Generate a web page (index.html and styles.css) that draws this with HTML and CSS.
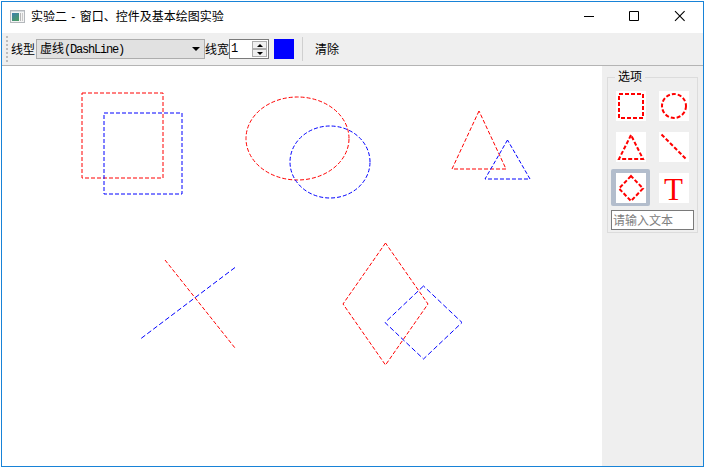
FILE: index.html
```html
<!DOCTYPE html>
<html lang="zh-CN">
<head>
<meta charset="utf-8">
<title>实验二 - 窗口、控件及基本绘图实验</title>
<link rel="stylesheet" href="styles.css">
</head>
<body>
<div class="window">
  <header class="titlebar">
    <svg class="app-icon" width="16" height="14" viewBox="0 0 16 14">
      <defs><linearGradient id="pane" x1="0" y1="0" x2="0.6" y2="1"><stop offset="0" stop-color="#3d7fae"/><stop offset="1" stop-color="#4a9a68"/></linearGradient></defs>
      <rect x="0.5" y="0.5" width="14" height="12" fill="#f4f4f4" stroke="#b4b8bc"/>
      <rect x="1" y="1" width="13" height="1" fill="#d5dade"/>
      <rect x="2" y="3" width="7" height="8" fill="url(#pane)"/>
      <rect x="10" y="3" width="1" height="8" fill="#b8b8b8"/>
      <rect x="12" y="3" width="1" height="8" fill="#c8c8c8"/>
    </svg>
    <h1 class="title">实验二 - 窗口、控件及基本绘图实验</h1>
    <svg class="caption" width="102" height="12" viewBox="0 0 102 12" fill="none" stroke="#000">
      <path d="M0 6.5H10M45.5 1.5H54.500V10.500H45.500Z"/>
      <path d="M91 1.200L100.600 10.800M100.600 1.200L91 10.800" stroke-width="1.100"/>
    </svg>
  </header>

  <div class="toolbar">
    <span class="grip"></span>
    <span class="label">线型</span>
    <div class="combo"><span>虚线<span class="latin">(DashLine)</span></span><i class="arrow"></i></div>
    <span class="label">线宽</span>
    <div class="spin"><span class="latin">1</span>
      <div class="steps"><button class="step"><i class="up"></i></button><button class="step"><i class="down"></i></button></div>
    </div>
    <span class="swatch"></span>
    <span class="divider"></span>
    <span class="label">清除</span>
  </div>

  <main class="content">
    <svg class="canvas" viewBox="2 66 600 400" width="600" height="400">
      <g class="red">
        <path d="M82 93H163V178H82Z"/>
        <path d="M349 138.500A51.500 41.500 0 0 0 246 138.500A51.500 41.500 0 0 0 349 138.500"/>
        <path d="M479 111L452 169H506Z"/>
        <path d="M165 260L235 348"/>
        <path d="M385.500 243L343 304L385.500 365L428 304Z"/>
      </g>
      <g class="blue">
        <path d="M104 113H182V194H104Z"/>
        <path d="M370 162A40 36 0 0 0 290 162A40 36 0 0 0 370 162"/>
        <path d="M507.500 140L485 179H530Z"/>
        <path class="long" d="M235 267.500L141 338.500"/>
        <path class="long" d="M423.500 286L385 322.500L423.500 359L462 322.500Z"/>
      </g>
    </svg>
    <aside class="side">
      <fieldset class="options">
        <legend>选项</legend>
        <div class="tools">
          <button class="tool"><svg viewBox="0 0 30 30"><path d="M3 3H27V27H3Z"/></svg></button>
          <button class="tool"><svg viewBox="0 0 30 30"><circle cx="15" cy="15" r="12"/></svg></button>
          <button class="tool"><svg viewBox="0 0 30 30"><path d="M15 3L3 27H27Z"/></svg></button>
          <button class="tool"><svg viewBox="0 0 30 30"><path d="M2.500 2.500L27.500 27.500"/></svg></button>
          <button class="tool selected"><svg viewBox="0 0 30 30"><path d="M15 3L3 15.500L15 28L27 15.500Z"/></svg></button>
          <button class="tool"><span class="letter">T</span></button>
        </div>
        <input class="text" type="text" placeholder="请输入文本">
      </fieldset>
    </aside>
  </main>
</div>
</body>
</html>
```
FILE: styles.css
```css
* { box-sizing: border-box; }
body {
  margin: 0;
  padding: 1px;
  width: 705px;
  height: 468px;
  overflow: hidden;
  background: #fff;
  color: #000;
  font: 12px/16px "Liberation Sans", "Noto Sans CJK SC", sans-serif;
}
button { margin: 0; padding: 0; border: 0; font: inherit; }
.window {
  display: flex;
  flex-direction: column;
  width: 703px;
  height: 466px;
  border: 1px solid #1883d7;
}
.titlebar {
  display: flex;
  align-items: center;
  flex: 0 0 31px;
  padding: 0 17px 3px 8px;
}
.app-icon { display: block; margin-top: 1px; }
.title {
  flex: 1;
  margin: 2px 0 0 5px;
  font-size: 12px;
  font-weight: 400;
  word-spacing: 1px;
  white-space: nowrap;
}
.caption { display: block; }
.toolbar {
  display: flex;
  align-items: center;
  flex: 0 0 33px;
  padding-left: 4px;
  background: #efefef;
  border-bottom: 1px solid #b4b4b4;
}
.grip {
  width: 2px;
  height: 26px;
  margin-right: 3px;
  background: repeating-linear-gradient(to bottom, #bdbdbd 0 2px, transparent 2px 4px);
}
.label { width: 24px; padding-top: 1px; white-space: nowrap; }
.latin { font: 12px/16px "Liberation Mono", monospace; letter-spacing: -1.200px; }
.combo {
  display: flex;
  align-items: center;
  justify-content: space-between;
  width: 169px;
  height: 20px;
  margin-left: 1px;
  padding: 0 4px 0 3px;
  background: #e1e1e1;
  border: 1px solid #adadad;
}
.combo > span { line-height: 16px; white-space: nowrap; }
.arrow {
  border: 4px solid transparent;
  border-top-color: #000;
  border-bottom: 0;
}
.spin {
  display: flex;
  align-items: center;
  justify-content: space-between;
  width: 40px;
  height: 20px;
  padding: 0 1px 0 1px;
  background: #fff;
  border: 1px solid #7a7a7a;
}
.steps { display: flex; flex-direction: column; }
.step {
  display: flex;
  align-items: center;
  justify-content: center;
  width: 15px;
  height: 8px;
  background: #f0f0f0;
  border: 1px solid #adadad;
}
.up, .down { border: 2.500px solid transparent; }
.up { border-width: 0 3px 3px; border-bottom-color: #000; }
.down { border-width: 3px 3px 0; border-top-color: #000; }
.swatch { width: 20px; height: 20px; margin-left: 5px; background: #00f; }
.divider { width: 1px; height: 24px; margin: 0 12px 0 8px; background: #d0d0d0; }
.content { display: flex; flex: 1; min-height: 0; }
.canvas { display: block; flex: 0 0 600px; background: #fff; }
.canvas path { fill: none; stroke-width: 1; stroke-dasharray: 4 2; }
.canvas .long { stroke-dasharray: 5 2.500; }
.red { stroke: #f00; }
.blue { stroke: #00f; }
.side { flex: 1; padding: 3px 5px; background: #efefef; }
.options {
  min-width: 0;
  height: 164px;
  margin: 0;
  padding: 0 3px;
  border: 1px solid #dcdcdc;
}
legend { height: 16px; margin-left: 4px; padding: 0 3px; line-height: 17px; }
.tools {
  display: grid;
  grid-template-columns: 38px 38px;
  grid-auto-rows: 37px;
  gap: 4px 5px;
  padding-top: 2px;
}
.tool {
  display: flex;
  align-items: center;
  justify-content: center;
  width: 39px;
  height: 37px;
  background: transparent;
  border-radius: 2px;
}
.tool.selected { background: #b3bdcc; }
.tool svg { display: block; width: 30px; height: 30px; background: #fff; fill: none; stroke: #f00; stroke-width: 2; stroke-dasharray: 4 2; }
.letter {
  width: 30px;
  height: 30px;
  background: #fff;
  color: #f00;
  font: 31px/33px "Liberation Serif", serif;
  text-align: center;
}
.text {
  display: block;
  width: 83px;
  height: 20px;
  margin: 4px 0 0;
  padding: 1px 1px 0;
  border: 1px solid #7a7a7a;
  background: #fff;
  font: inherit;
}
.text::placeholder { color: #808080; opacity: 1; }
```
